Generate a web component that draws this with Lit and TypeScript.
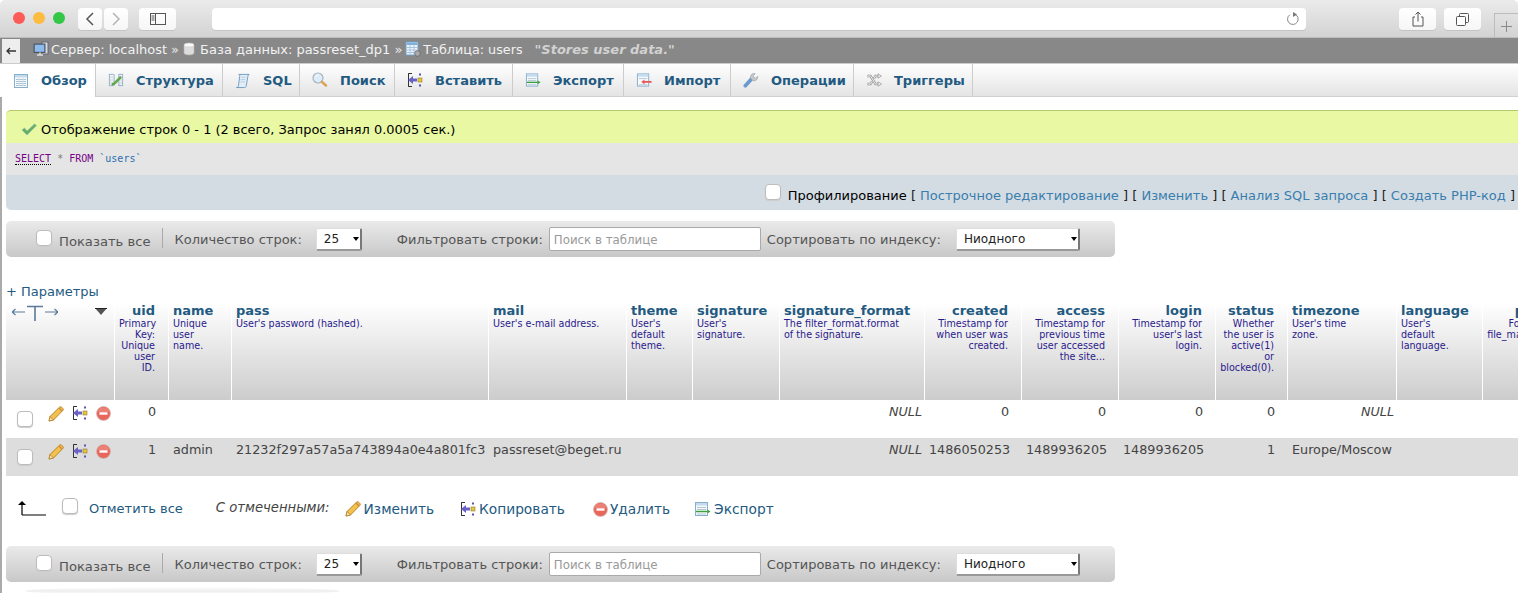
import { LitElement, html, css } from "lit";
import { customElement } from "lit/decorators.js";

const icoTable = html`<svg width="16" height="16" viewBox="0 0 16 16"><rect x="1.500" y="1.500" width="13" height="13" fill="#f7fafd" stroke="#86aecd"/><rect x="2" y="2" width="12" height="2.500" fill="#c4dbee"/><path d="M3 6.500h10M3 8.500h10M3 10.500h10M3 12.500h10" stroke="#a8c0d2"/><path d="M6 5v8M10 5v8" stroke="#d2e0ea"/></svg>`;
const icoStruct = html`<svg width="16" height="16" viewBox="0 0 17 16"><path d="M1.500 2v12M6.500 2v12M11.500 2v12M15.500 2v12M1 2h5M11 2h5M1 14h5M11 14h5" stroke="#8fb0c8" fill="none"/><path d="M2 5h4M2 8h4M2 11h4M12 5h3M12 8h3M12 11h3" stroke="#c4d5e1"/><path d="M4 12l2-1 7-7 1.500 1.500-7 7-3 1z" fill="#62ad44" stroke="#43852e" stroke-width=".5"/></svg>`;
const icoSql = html`<svg width="16" height="17" viewBox="0 0 17 17"><path d="M4 2h11c-1 .5-1.500 2-1.500 3L12 14c-.3 1.500-1 2-2 2H1.500c1 0 2-.8 2.200-2L5 4c.1-1 0-1.700-1-2z" fill="#e2edf7" stroke="#6c9ac0"/><path d="M6.500 5h5M6 7.500h5M5.500 10h5" stroke="#b4cde2"/></svg>`;
const icoSearch = html`<svg width="16" height="16" viewBox="0 0 16 16"><circle cx="6" cy="6" r="5" fill="#dcecf8" stroke="#a8b4bd" stroke-width="1.200"/><path d="M10 10l4 3.500" stroke="#dba55a" stroke-width="2.600" stroke-linecap="round"/><path d="M3.500 5a3 3 0 0 1 2.500-2" stroke="#fff" fill="none"/></svg>`;
const icoInsert = html`<svg width="16" height="16" viewBox="0 0 16 16"><path d="M5 1.500H1.500V14.500H5M1.500 1.500v13" stroke="#333" fill="none"/><path d="M1 8l5-4v2.500h4v3H6V12z" fill="#6a62c4"/><rect x="11" y="6" width="4" height="4" fill="#e6c640" stroke="#7c6a10" stroke-width=".5"/><rect x="12" y="1.500" width="2" height="2" fill="#5a52b4"/><rect x="12" y="12.500" width="2" height="2" fill="#5a52b4"/></svg>`;
const icoExport = html`<svg width="17" height="16" viewBox="0 0 17 16"><rect x="1.500" y="1.500" width="12" height="13" fill="#f7fafd" stroke="#86aecd"/><rect x="2" y="2" width="11" height="2.500" fill="#c4dbee"/><path d="M3 6.500h9M3 8.500h9M3 13h9" stroke="#b4c8d6"/><path d="M2 10.500h11.500" stroke="#3f9f3f" stroke-width="1.500"/><path d="M13.500 8.500l3 2-3 2z" fill="#3f9f3f"/></svg>`;
const icoImport = html`<svg width="17" height="16" viewBox="0 0 17 16"><rect x="1.500" y="1.500" width="12" height="13" fill="#f7fafd" stroke="#86aecd"/><rect x="2" y="2" width="11" height="2.500" fill="#c4dbee"/><path d="M3 6.500h9M3 13h9" stroke="#b4c8d6"/><path d="M8 10h8.500" stroke="#e85a5a" stroke-width="2"/><path d="M9 7.500L5.500 10 9 12.500z" fill="#e85a5a"/></svg>`;
const icoWrench = html`<svg width="17" height="17" viewBox="0 0 17 17"><path d="M2.500 14l6.500-7" stroke="#6c9ad0" stroke-width="4" stroke-linecap="round"/><path d="M8 6c-.5-2.500 1-5 3.500-5l1.500.2-2 2.300.5 2 2 .5 2.200-2c.4 3-2 5.500-5 4.800z" fill="#c3c9ce" stroke="#949ca3" stroke-width=".6"/></svg>`;
const icoTrig = html`<svg width="16" height="14" viewBox="0 0 16 14"><path d="M1 3h3.500l5 8H12M1 11h3.500l1.500-2.500M8 5.500L9.500 3H12" stroke="#999" stroke-width="2.400" fill="none"/><path d="M1 3h3.500l5 8H12M1 11h3.500l1.500-2.500M8 5.500L9.500 3H12" stroke="#f2f2f2" stroke-width="1" fill="none"/><path d="M12 .8L15.500 3 12 5.200zM12 8.800l3.500 2.200-3.500 2.200z" fill="#eee" stroke="#888" stroke-width=".6"/></svg>`;
const icoPencil = html`<svg width="16" height="16" viewBox="0 0 16 16"><path d="M1 15l1-4.500L11.500 1.200c.7-.6 1.500-.6 2.100 0l1.200 1.200c.6.600.6 1.400 0 2.100L5.500 14z" fill="#f2c14e" stroke="#b07a1c" stroke-width=".9"/><path d="M1 15l1-4.500L5.500 14z" fill="#f6dfb0" stroke="#b07a1c" stroke-width=".7"/><path d="M11 2l3 3" stroke="#d98a3a" stroke-width="1.500"/></svg>`;
const icoDelete = html`<svg width="15" height="15" viewBox="0 0 15 15"><circle cx="7.500" cy="7.500" r="7" fill="#e8665c" stroke="#c9c0bc" stroke-width=".7"/><path d="M1.500 6a6.300 6.300 0 0 1 12 0z" fill="#f08c80" opacity=".7"/><rect x="3.500" y="6.300" width="8" height="2.400" fill="#fff"/></svg>`;
const icoCheck = html`<svg width="16" height="14" viewBox="0 0 16 14"><path d="M1 8l2.500-2 2.500 3L13.500 2l2 1.500L6 13z" fill="#63b06a" stroke="#8fb79a" stroke-width=".6"/></svg>`;
const icoServer = html`<svg width="16" height="16" viewBox="0 0 16 16"><rect x="9" y="1" width="6" height="12" fill="#d8dce0" stroke="#667"/><rect x="1" y="3" width="11" height="8.500" fill="#5a8ed0" stroke="#555"/><rect x="2" y="4" width="9" height="6.500" fill="#8fbaec"/><path d="M4 14h6M7 11.500V14" stroke="#ddd" stroke-width="1.500"/></svg>`;
const icoDb = html`<svg width="12" height="14" viewBox="0 0 12 14"><path d="M1 3v8c0 2.500 10 2.500 10 0V3z" fill="#dcdcdc" stroke="#bbb" stroke-width=".6"/><ellipse cx="6" cy="3" rx="5" ry="2" fill="#fafafa" stroke="#ccc" stroke-width=".6"/></svg>`;
const icoTbl2 = html`<svg width="16" height="16" viewBox="0 0 16 16"><rect x="1" y="1" width="12" height="13" fill="#eef4fb" stroke="#6f9fc4"/><rect x="1.500" y="1.500" width="11" height="2.500" fill="#7fb0dc"/><path d="M2 6.500h10M2 9h10M2 11.500h10M5 4v9M9 4v9" stroke="#a8c4dc"/><circle cx="12.500" cy="12.500" r="2.800" fill="#aaa" stroke="#666" stroke-width=".8"/></svg>`;

interface Col { n: string; w: number; r?: boolean; d: string[]; }
const cols: Col[] = [
  { n: "uid", w: 54, r: true, d: ["Primary", "Key:", "Unique", "user", "ID."] },
  { n: "name", w: 63, d: ["Unique", "user", "name."] },
  { n: "pass", w: 257, d: ["User's password (hashed)."] },
  { n: "mail", w: 138, d: ["User's e-mail address."] },
  { n: "theme", w: 66, d: ["User's", "default", "theme."] },
  { n: "signature", w: 87, d: ["User's", "signature."] },
  { n: "signature_format", w: 145, d: ["The filter_format.format", "of the signature."] },
  { n: "created", w: 97, r: true, d: ["Timestamp for", "when user was", "created."] },
  { n: "access", w: 97, r: true, d: ["Timestamp for", "previous time", "user accessed", "the site..."] },
  { n: "login", w: 97, r: true, d: ["Timestamp for", "user's last", "login."] },
  { n: "status", w: 72, r: true, d: ["Whether", "the user is", "active(1)", "or", "blocked(0)."] },
  { n: "timezone", w: 109, d: ["User's time", "zone."] },
  { n: "language", w: 86, d: ["User's", "default", "language."] },
  { n: "picture", w: 98, r: true, d: ["Foreign Key:", "file_managed.fid"] },
];
const rows: (string | null)[][] = [
  ["0", "", "", "", "", "", null, "0", "0", "0", "0", null, "", ""],
  ["1", "admin", "21232f297a57a5a743894a0e4a801fc3", "passreset@beget.ru", "", "", null, "1486050253", "1489936205", "1489936205", "1", "Europe/Moscow", "", ""],
];
const tabs = [
  ["Обзор", icoTable, 96], ["Структура", icoStruct, 127], ["SQL", icoSql, 77], ["Поиск", icoSearch, 95], ["Вставить", icoInsert, 118],
  ["Экспорт", icoExport, 111], ["Импорт", icoImport, 107], ["Операции", icoWrench, 123], ["Триггеры", icoTrig, 119],
] as const;

@customElement("app-root")
export class AppRoot extends LitElement {
  static styles = css`
    :host { display: block; width: 1518px; height: 593px; overflow: hidden; background: #fff; font-family: "DejaVu Sans", sans-serif; font-size: 13px; color: #444; }
    svg { display: block; flex: none; }
    .chrome { height: 38px; box-sizing: border-box; border-bottom: 1px solid #bdbdbd; background: linear-gradient(#ebebeb, #d3d3d3); border-radius: 5px 5px 0 0; display: flex; align-items: flex-start; padding: 8px 0 0 13px; }
    .lights { display: flex; gap: 8px; margin-top: 4px; margin-right: 13px; }
    .light { width: 12px; height: 12px; border-radius: 50%; }
    .btn { height: 22px; background: linear-gradient(#fff, #f6f6f6); border-radius: 4px; box-shadow: 0 1px 0 #c4c4c4; display: flex; align-items: center; justify-content: center; flex: none; }
    .b-nav { width: 24px; margin-right: 2px; }
    .b-side { width: 37px; margin: 0 36px 0 9px; }
    .addr { width: 1094px; flex: none; height: 22px; background: #fff; border-radius: 4px; box-shadow: 0 1px 0 #c4c4c4; display: flex; align-items: center; justify-content: flex-end; padding-right: 5px; box-sizing: border-box; margin-right: 93px; }
    .b-wide { width: 37px; margin-right: 8px; }
    .plus { width: 24px; height: 25px; flex: none; margin: 5px 0 0 5px; box-sizing: border-box; border: 1px solid #bcbcbc; border-right: 0; border-bottom: 0; display: flex; align-items: center; justify-content: center; }
    .crumb { height: 26px; box-sizing: border-box; background: #888; border-bottom: 1px solid #ccc; padding-bottom: 3px; display: flex; align-items: center; color: #e8e8e8; white-space: nowrap; }
    .back { width: 18px; height: 24px; margin: 0 13px -3px 2px; background: #eee; display: flex; align-items: center; justify-content: center; }
    .crumb svg { margin-right: 2px; }
    .crumb .back svg { margin: 0; }
    .sep { margin: 0 4px; }
    .sep.s2 { margin: 0 3px 0 4px; }
    .crumb .c { color: #f2f2f2; }
    .crumb .narrow { font-size: 12.75px; }
    .crumb .b { margin-left: 3px; }
    .cmt { color: #d2d2d2; font-weight: bold; font-style: italic; margin-left: 12px; }
    .tabs { height: 33px; box-sizing: border-box; display: flex; background: linear-gradient(#fff, #e4e4e4); border-bottom: 1px solid #d0d0d0; }
    .tab { display: flex; align-items: center; box-sizing: border-box; padding: 0 0 0 12px; border-right: 1px solid #ccc; font-weight: bold; font-size: 13px; color: #235a81; white-space: nowrap; }
    .tab svg { width: 16px; margin-right: 12px; }
    .tab.active { background: #fff; height: 33px; padding-left: 13px; }
    .main { border-left: 2px solid #aaa; padding: 13px 0 0 4px; height: 496px; }
    .msg { height: 33px; box-sizing: border-box; background: #e9f8a2; border-top: 1px solid #b5c96e; border-radius: 5px 0 0 0; display: flex; align-items: center; padding: 4px 0 0 15px; gap: 4px; color: #000; font-size: 12.94px; }
    .sql { height: 32px; box-sizing: border-box; background: #e5e5e5; padding: 10px 0 0 9px; font-family: "DejaVu Sans Mono", monospace; font-size: 10px; color: #777; }
    .kw { color: #708; }
    .kw.u { border-bottom: 1px dotted #000; }
    .id { color: #2a6fb0; }
    .prof { height: 35px; box-sizing: border-box; background: #d3dce3; border-radius: 0 0 0 5px; display: flex; align-items: center; justify-content: flex-end; padding-right: 3px; color: #222; white-space: nowrap; gap: 7px; }
    .prof .tx { margin-top: 5px; }
    .prof input.ck { margin-top: -1px; }
    .prof a { color: #3a7ead; }
    .prof .pn { color: #000; }
    input.ck { appearance: none; margin: 0; width: 16px; height: 16px; box-sizing: border-box; background: #fff; border: 1px solid #bcbcbc; border-radius: 4px; flex: none; box-shadow: 0 1px 1px #ccc; }
    .bar { width: 1109px; height: 36px; box-sizing: border-box; background: linear-gradient(#eaeaea, #c8c8c8); border-radius: 5px; display: flex; align-items: center; margin-top: 11px; padding-left: 30px; color: #555; white-space: nowrap; }
    .bar input.ck { margin-top: -3px; }
    .show { margin-left: 7px; margin-top: 5px; font-size: 13.15px; }
    .vr { width: 1px; height: 20px; background: #aaa; margin: -2px 12px 0 11px; }
    .sel { height: 23px; box-sizing: border-box; background: #fff; border: 1px solid #ddd; border-right: 2px solid #777; border-bottom: 2px solid #999; border-radius: 2px; display: flex; align-items: center; justify-content: space-between; font-size: 12px; color: #222; padding: 1px 0 0 7px; }
    .sel.small { width: 46px; margin-left: 14px; margin-right: 35px; }
    .sel.big { width: 124px; margin-left: 15px; padding-left: 7px; }
    .sel i { width: 0; height: 0; border: 3px solid transparent; border-top: 4px solid #000; border-bottom: 0; margin-right: 1px; }
    .search { width: 212px; height: 24px; box-sizing: border-box; margin: 0 6px; background: #fff; border: 1px solid #aaa; border-radius: 2px; font: 11.8px "DejaVu Sans", sans-serif; color: #999; display: flex; align-items: center; padding: 1px 0 0 4px; }
    .params { margin-top: 27px; height: 19px; color: #235a81; line-height: 15px; }
    table { border-collapse: separate; border-spacing: 0; table-layout: fixed; width: 1574px; }
    th { height: 97px; box-sizing: border-box; vertical-align: top; text-align: left; padding: 0 5px 0 4px; background: linear-gradient(#fff, #ccc); border-left: 1px solid #fff; font-weight: normal; white-space: nowrap; overflow: hidden; }
    th.first { border-left: 0; padding: 0; }
    th.r { text-align: right; padding-right: 13px; }
    td.r { text-align: right; padding-right: 12px; }
    .th-n { display: block; font-weight: bold; font-size: 13px; color: #235a81; line-height: 15px; }
    .th-d { display: block; font-size: 9.6px; line-height: 11px; color: #2a1a8c; }
    .hd1 { display: flex; justify-content: space-between; padding: 2px 7px 0 6px; }
    td { height: 38px; box-sizing: border-box; vertical-align: top; padding: 4px 5px 0; white-space: nowrap; line-height: 16px; font-size: 12.75px; }
    tr.odd td { background: #ddd; }
    td.nul { text-align: right; font-style: italic; padding-right: 2px; }
    td.ctl { padding: 0; }
    .acts { display: flex; align-items: flex-start; padding-left: 11px; }
    .acts input.ck { margin-top: 11px; margin-right: 15px; }
    .ic1 { margin: 6px 8px 0 0; }
    .ic2 { margin: 5px 8px 0 0; }
    .ic3 { margin-top: 6px; }
    .bulk { height: 59px; box-sizing: border-box; padding: 5px 0 0 12px; display: flex; align-items: center; white-space: nowrap; }
    .bulk .link { color: #235a81; }
    .arr { margin-right: 16px; }
    .bulk input.ck { margin-right: 11px; margin-top: -4px; }
    .wsel { font-style: italic; margin: -2px 15px 0 33px; color: #444; font-size: 13.2px; }
    .act { display: flex; align-items: center; gap: 3px; color: #235a81; margin-right: 26px; font-size: 13.75px; margin-top: 2px; }
    .act.wide { margin-right: 28px; }
    .act.del { margin-right: 24px; gap: 2px; }
    .fade { width: 315px; height: 8px; margin: 5px 0 0 19px; background: linear-gradient(#fff, #eee 50%, #fff); border-radius: 50%; }
  `;

  private bar() {
    return html`<div class="bar">
      <input class="ck" type="checkbox" /><span class="show">Показать все</span><span class="vr"></span>
      <span>Количество строк:</span><span class="sel small">25<i></i></span>
      <span>Фильтровать строки:</span><span class="search">Поиск в таблице</span>
      <span>Сортировать по индексу:</span><span class="sel big">Ниодного<i></i></span>
    </div>`;
  }

  render() {
    return html`
      <div class="chrome">
        <div class="lights">
          <span class="light" style="background:#fc5b57"></span><span class="light" style="background:#fdbc40"></span><span class="light" style="background:#33c748"></span>
        </div>
        <div class="btn b-nav"><svg width="10" height="14" viewBox="0 0 10 14"><path d="M8 1L2 7l6 6" fill="none" stroke="#555" stroke-width="1.500"/></svg></div>
        <div class="btn b-nav"><svg width="10" height="14" viewBox="0 0 10 14"><path d="M2 1l6 6-6 6" fill="none" stroke="#b4b4b4" stroke-width="1.500"/></svg></div>
        <div class="btn b-side"><svg width="16" height="12" viewBox="0 0 16 12"><rect x=".5" y=".5" width="15" height="11" fill="none" stroke="#555"/><path d="M5.500 0v12M1.500 3h3M1.500 5h3M1.500 7h3" stroke="#555"/></svg></div>
        <div class="addr"><svg width="16" height="16" viewBox="0 0 16 16"><path d="M10 3.300a5.300 5.300 0 1 1-5.200.5" fill="none" stroke="#888" stroke-width="1"/><path d="M8 1l4 2.500L8 6z" fill="#777"/></svg></div>
        <div class="btn b-wide"><svg width="12" height="16" viewBox="0 0 12 16"><path d="M3 6H1v9h10V6H9M6 10.500V1M3.500 3.500L6 1l2.500 2.500" fill="none" stroke="#555"/></svg></div>
        <div class="btn b-wide"><svg width="13" height="13" viewBox="0 0 13 13"><rect x="3.500" y=".5" width="9" height="9" rx="1" fill="none" stroke="#555"/><rect x=".5" y="3.500" width="9" height="9" rx="1" fill="#fff" stroke="#555"/></svg></div>
        <div class="plus"><svg width="13" height="13" viewBox="0 0 13 13"><path d="M6.500 1v11M1 6.500h11" stroke="#8a8a8a"/></svg></div>
      </div>
      <div class="crumb">
        <span class="back"><svg width="10" height="8" viewBox="0 0 10 8"><path d="M10 4H1.500M4 1L1 4l3 3" fill="none" stroke="#333" stroke-width="1.300"/></svg></span>
        ${icoServer}<span class="c">Сервер: localhost</span><span class="sep">»</span>
        ${icoDb}<span class="c b">База данных: passreset_dp1</span><span class="sep s2">»</span>
        ${icoTbl2}<span class="c narrow">Таблица: users</span><span class="cmt">"Stores user data."</span>
      </div>
      <div class="tabs">
        ${tabs.map(([t, i, w], idx) => html`<div class="tab ${idx === 0 ? "active" : ""}" style="width:${w}px">${i}<span>${t}</span></div>`)}
      </div>
      <div class="main">
        <div class="msg">${icoCheck}<span>Отображение строк 0 - 1 (2 всего, Запрос занял 0.0005 сек.)</span></div>
        <div class="sql"><span class="kw u">SELECT</span> * <span class="kw">FROM</span> <span class="id">\`users\`</span></div>
        <div class="prof">
          <input class="ck" type="checkbox" />
          <span class="tx"><span class="pn">Профилирование</span> [ <a>Построчное редактирование</a> ] [ <a>Изменить</a> ] [ <a>Анализ SQL запроса</a> ] [ <a>Создать PHP-код</a> ]</span>
        </div>
        ${this.bar()}
        <div class="params">+ Параметры</div>
        <table>
          <colgroup><col style="width:108px" />${cols.map((c) => html`<col style="width:${c.w}px" />`)}</colgroup>
          <thead><tr>
            <th class="first"><div class="hd1">
              <svg width="46" height="16" viewBox="0 0 46 16"><path d="M0 7h13M3.500 4L0 7l3.500 3M33 7h13M42.500 4L46 7l-3.500 3" fill="none" stroke="#5a7a9a" stroke-width="1.200"/><path d="M15 1.500h16M23 1.500V16" fill="none" stroke="#5a7a9a" stroke-width="1.600"/></svg>
              <svg width="12" height="8" viewBox="0 0 12 8" style="margin-top:3px"><path d="M0 0h12L6 7z" fill="#555"/><path d="M0 .5h12" stroke="#222"/></svg>
            </div></th>
            ${cols.map((c) => html`<th class=${c.r ? "r" : ""}><span class="th-n">${c.n}</span>${c.d.map((l) => html`<span class="th-d">${l}</span>`)}</th>`)}
          </tr></thead>
          <tbody>
            ${rows.map((r, ri) => html`<tr class=${ri % 2 ? "odd" : ""}>
              <td class="ctl"><div class="acts"><input class="ck" type="checkbox" /><span class="ic1">${icoPencil}</span><span class="ic2">${icoInsert}</span><span class="ic3">${icoDelete}</span></div></td>
              ${r.map((v, i) => v === null ? html`<td class="nul">NULL</td>` : html`<td class=${cols[i].r ? "r" : ""}>${v}</td>`)}
            </tr>`)}
          </tbody>
        </table>
        <div class="bulk">
          <svg class="arr" width="28" height="16" viewBox="0 0 28 16"><path d="M4 15h24M4 15V3" fill="none" stroke="#000" stroke-width="1.200"/><path d="M0 5l4-4 4 4z" fill="#000"/></svg>
          <input class="ck" type="checkbox" /><span class="link">Отметить все</span>
          <span class="wsel">С отмеченными:</span>
          <span class="act">${icoPencil}Изменить</span>
          <span class="act wide">${icoInsert}Копировать</span>
          <span class="act del">${icoDelete}Удалить</span>
          <span class="act">${icoExport}Экспорт</span>
        </div>
        ${this.bar()}
        <div class="fade"></div>
      </div>
    `;
  }
}
